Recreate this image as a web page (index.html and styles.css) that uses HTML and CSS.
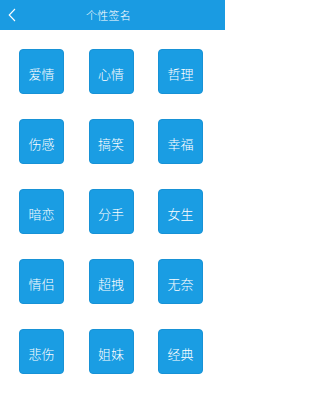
FILE: index.html
```html
<!DOCTYPE html>
<html lang="zh">
<head>
<meta charset="utf-8">
<link rel="stylesheet" href="styles.css">
</head>
<body>
<div class="app">
  <header class="bar">
    <span class="back">
      <svg width="8" height="14" viewBox="0 0 8 14"><path d="M7 1 L1.2 7 L7 13" fill="none" stroke="#fff" stroke-width="1.1"/></svg>
    </span>
    <h1 class="title">个性签名</h1>
  </header>
  <main class="grid">
    <div class="tile">爱情</div>
    <div class="tile">心情</div>
    <div class="tile">哲理</div>
    <div class="tile">伤感</div>
    <div class="tile">搞笑</div>
    <div class="tile">幸福</div>
    <div class="tile">暗恋</div>
    <div class="tile">分手</div>
    <div class="tile">女生</div>
    <div class="tile">情侣</div>
    <div class="tile">超拽</div>
    <div class="tile">无奈</div>
    <div class="tile">悲伤</div>
    <div class="tile">姐妹</div>
    <div class="tile">经典</div>
  </main>
</div>
</body>
</html>
```

FILE: styles.css
```css
html, body {
  margin: 0;
  padding: 0;
  background: #ffffff;
}
body {
  font-family: "Noto Sans CJK SC", "Noto Sans", sans-serif;
}
.app {
  width: 225px;
  height: 400px;
}
.bar {
  position: relative;
  height: 30px;
  background: #1a9be2;
  display: flex;
  align-items: center;
  justify-content: center;
}
.back {
  position: absolute;
  left: 8px;
  top: 8px;
  width: 8px;
  height: 14px;
  display: flex;
}
.title {
  margin: 0 8px 0 0;
  font-size: 11px;
  font-weight: 300;
  color: #ffffff;
  line-height: 14px;
  letter-spacing: 0.3px;
}
.grid {
  display: grid;
  grid-template-columns: repeat(3, 45px);
  grid-auto-rows: 45px;
  column-gap: 24.5px;
  row-gap: 25px;
  padding: 19px 0 0 19px;
}
.tile {
  background: #1a9de3;
  border: 1px solid #1792d6;
  box-sizing: border-box;
  border-radius: 4px;
  color: #ffffff;
  font-size: 13px;
  font-weight: 300;
  display: flex;
  align-items: center;
  justify-content: center;
  padding-top: 4px;
  line-height: 13px;
}
```
